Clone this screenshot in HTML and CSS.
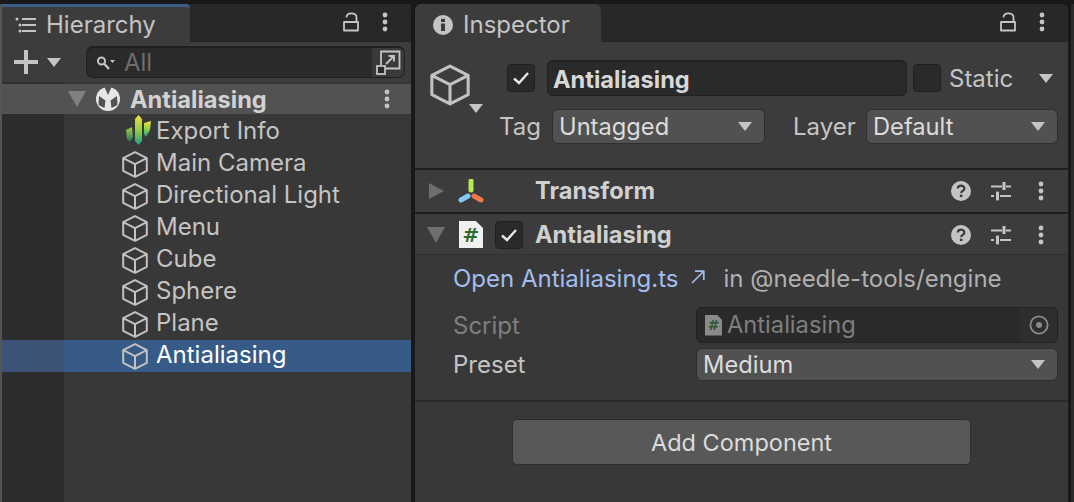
FILE: index.html
```html
<!DOCTYPE html>
<html lang="en">
<head>
  <meta charset="UTF-8" />
  <title>Inspector</title>
  <link rel="stylesheet" href="styles.css">
</head>
<body>
  <svg class="sprites" width="0" height="0">
    <defs>
      <symbol id="cube" viewBox="0 0 26 27">
        <path d="M13 1.2 L24.8 7.2 V19.8 L13 25.8 L1.2 19.8 V7.2 Z M1.2 7.2 L13 13.2 L24.8 7.2 M13 13.2 V25.8" fill="none" stroke="currentColor" stroke-width="2" stroke-linejoin="round" />
      </symbol>
      <symbol id="lock" viewBox="0 0 16 20">
        <path d="M1 10 H15 V18.5 H1 Z" fill="none" stroke="currentColor" stroke-width="1.8" stroke-linejoin="round" />
        <path d="M13.5 10 V5 C13.5 0 3.5 0 3.5 5.5" fill="none" stroke="currentColor" stroke-width="1.8" />
      </symbol>
      <symbol id="dots" viewBox="0 0 6 20">
        <circle cx="3" cy="3" r="2.4" fill="currentColor" />
        <circle cx="3" cy="10" r="2.4" fill="currentColor" />
        <circle cx="3" cy="17" r="2.4" fill="currentColor" />
      </symbol>
      <symbol id="help" viewBox="0 0 20 20">
        <circle cx="10" cy="10" r="10" fill="currentColor" />
        <path d="M6.8 7.6 C6.8 3.6 13.4 3.6 13.4 7.4 C13.4 9.8 10.1 9.8 10.1 12" fill="none" stroke="#3c3c3c" stroke-width="2.2" />
        <rect x="8.9" y="13.6" width="2.5" height="2.5" fill="#3c3c3c" />
      </symbol>
      <symbol id="sliders" viewBox="0 0 20 20">
        <path d="M0 5.5 H11 M15 5.5 H20 M0 15 H3 M9 15 H20" stroke="currentColor" stroke-width="2" />
        <rect x="11.5" y="1" width="3" height="8" fill="currentColor" />
        <rect x="5" y="10.5" width="3" height="9" rx="1" fill="currentColor" />
      </symbol>
    </defs>
  </svg>

  <div class="editor">
    <section class="panel hierarchy">
      <div class="tabbar">
        <div class="tab tab-active">
          <svg class="tab-icon" width="22" height="16" viewBox="0 0 22 16">
            <path d="M7 2 H21 M7 8 H21 M7 14 H21" stroke="#c4c4c4" stroke-width="2" />
            <circle cx="2" cy="2" r="1.5" fill="#c4c4c4" />
            <circle cx="5" cy="8" r="1.5" fill="#c4c4c4" />
            <circle cx="5" cy="14" r="1.5" fill="#c4c4c4" />
          </svg>
          <span>Hierarchy</span>
        </div>
        <div class="tab-tools">
          <svg class="ic-lock"><use href="#lock" /></svg>
          <svg class="ic-dots"><use href="#dots" /></svg>
        </div>
      </div>

      <div class="toolbar">
        <svg class="ic-plus" width="24" height="24" viewBox="0 0 24 24">
          <path d="M12 0 V24 M0 12 H24" stroke="#c4c4c4" stroke-width="4" />
        </svg>
        <span class="caret"></span>
        <div class="search">
          <svg class="ic-search" width="20" height="16" viewBox="0 0 20 16">
            <circle cx="5.5" cy="6" r="3.5" fill="none" stroke="#c4c4c4" stroke-width="2" />
            <path d="M8 8.5 L13 14" stroke="#c4c4c4" stroke-width="2.4" />
            <path d="M14 5 H19 L16.5 8 Z" fill="#c4c4c4" />
          </svg>
          <span class="search-text">All</span>
          <div class="search-btn">
            <svg width="25" height="25" viewBox="0 0 25 25">
              <path d="M5 15 V1.5 H23.5 V18.5 H10" fill="none" stroke="#c4c4c4" stroke-width="1.8" />
              <path d="M10 14 L18 6 M12.5 6 H18 V11.5" fill="none" stroke="#c4c4c4" stroke-width="1.8" />
              <rect x="1" y="16" width="8" height="8" fill="#2a2a2a" stroke="#c4c4c4" stroke-width="1.8" />
            </svg>
          </div>
        </div>
      </div>

      <div class="tree">
        <div class="scene-row">
          <span class="tree-arrow"></span>
          <svg class="ic-unity" width="24" height="26" viewBox="0 0 24 26">
            <circle cx="12" cy="13" r="12" fill="#e6e6e6" />
            <path d="M12 9 L8 0 H16 Z M9.5 14.5 L3 10 L2.5 19 L8.5 22 Z M14.5 14.5 L21 10 L21.5 19 L15.5 22 Z" fill="#525252" />
          </svg>
          <span class="scene-name">Antialiasing</span>
          <svg class="ic-dots"><use href="#dots" /></svg>
        </div>
        <div class="tree-row">
          <svg class="ic-export" width="26" height="30" viewBox="0 0 26 30">
            <defs>
              <linearGradient id="cactus" x1="0" y1="0" x2="0" y2="1">
                <stop offset="0" stop-color="#f4e13c" />
                <stop offset="0.5" stop-color="#8fce45" />
                <stop offset="1" stop-color="#1f9c8c" />
              </linearGradient>
              <linearGradient id="cactus-left" x1="0" y1="0" x2="0" y2="1">
                <stop offset="0" stop-color="#a5d040" />
                <stop offset="1" stop-color="#25705f" />
              </linearGradient>
            </defs>
            <path d="M9 4 L12.5 0 L16 4 V26 L12.5 30 L9 26 Z" fill="url(#cactus)" />
            <path d="M0 15 L6 12 L7 22 L4 27 L1 24 Z" fill="url(#cactus-left)" />
            <path d="M18 8 L25 6 L24 15 L20 22 L18 19 Z" fill="url(#cactus)" />
          </svg>
          <span>Export Info</span>
        </div>
        <div class="tree-row"><svg class="ic-cube"><use href="#cube" /></svg><span>Main Camera</span></div>
        <div class="tree-row"><svg class="ic-cube"><use href="#cube" /></svg><span>Directional Light</span></div>
        <div class="tree-row"><svg class="ic-cube"><use href="#cube" /></svg><span>Menu</span></div>
        <div class="tree-row"><svg class="ic-cube"><use href="#cube" /></svg><span>Cube</span></div>
        <div class="tree-row"><svg class="ic-cube"><use href="#cube" /></svg><span>Sphere</span></div>
        <div class="tree-row"><svg class="ic-cube"><use href="#cube" /></svg><span>Plane</span></div>
        <div class="tree-row tree-row-selected"><svg class="ic-cube"><use href="#cube" /></svg><span>Antialiasing</span></div>
      </div>
    </section>

    <section class="panel inspector">
      <div class="tabbar">
        <div class="tab tab-inspector">
          <svg class="tab-icon" width="20" height="20" viewBox="0 0 20 20">
            <circle cx="10" cy="10" r="10" fill="#c4c4c4" />
            <rect x="8" y="8.5" width="4" height="7.5" fill="#3c3c3c" />
            <rect x="8" y="3.8" width="4" height="3.2" fill="#3c3c3c" />
          </svg>
          <span>Inspector</span>
        </div>
        <div class="tab-tools">
          <svg class="ic-lock"><use href="#lock" /></svg>
          <svg class="ic-dots"><use href="#dots" /></svg>
        </div>
      </div>

      <div class="object-head">
        <div class="object-line">
          <div class="object-icon">
            <svg class="ic-cube-lg"><use href="#cube" /></svg>
            <span class="caret caret-object"></span>
          </div>
          <span class="check"><svg width="18" height="14" viewBox="0 0 18 14"><path d="M2 7.5 L7 12 L16 2" fill="none" stroke="#e6e6e6" stroke-width="2.4" /></svg></span>
          <div class="name-field">Antialiasing</div>
          <span class="check check-static"></span>
          <span class="static-label">Static</span>
          <span class="caret caret-static"></span>
        </div>
        <div class="tag-line">
          <span class="tag-label">Tag</span>
          <div class="popup popup-tag"><span>Untagged</span><span class="caret"></span></div>
          <span class="layer-label">Layer</span>
          <div class="popup popup-layer"><span>Default</span><span class="caret"></span></div>
        </div>
      </div>

      <div class="comp-head comp-transform">
        <span class="arrow-right"></span>
        <svg class="ic-transform" width="26" height="24" viewBox="0 0 26 24">
          <path d="M13 2 V11" stroke="#b5e853" stroke-width="5" stroke-linecap="round" />
          <path d="M3 21 L10 17" stroke="#84c9f5" stroke-width="5" stroke-linecap="round" />
          <path d="M16 17 L23 21" stroke="#ee7a4c" stroke-width="5" stroke-linecap="round" />
        </svg>
        <span class="comp-title">Transform</span>
        <svg class="ic-help"><use href="#help" /></svg>
        <svg class="ic-sliders"><use href="#sliders" /></svg>
        <svg class="ic-dots"><use href="#dots" /></svg>
      </div>

      <div class="comp-head comp-script">
        <span class="arrow-down"></span>
        <span class="doc">#</span>
        <span class="check"><svg width="18" height="14" viewBox="0 0 18 14"><path d="M2 7.5 L7 12 L16 2" fill="none" stroke="#e6e6e6" stroke-width="2.4" /></svg></span>
        <span class="comp-title">Antialiasing</span>
        <svg class="ic-help"><use href="#help" /></svg>
        <svg class="ic-sliders"><use href="#sliders" /></svg>
        <svg class="ic-dots"><use href="#dots" /></svg>
      </div>

      <div class="comp-body">
        <div class="open-line">
          <a class="open-link">Open Antialiasing.ts</a>
          <svg class="ic-external" width="14" height="14" viewBox="0 0 14 14">
            <path d="M1 13 L12.5 1.5 M4 1.2 H12.8 V10" fill="none" stroke="#a3bdf0" stroke-width="1.7" />
          </svg>
          <span class="open-where">in @needle-tools/engine</span>
        </div>
        <div class="prop-row prop-script">
          <span class="prop-label prop-label-off">Script</span>
          <div class="object-field">
            <span class="doc doc-small">#</span>
            <span class="object-text">Antialiasing</span>
            <div class="object-pick">
              <svg width="20" height="20" viewBox="0 0 20 20">
                <circle cx="10" cy="10" r="8.6" fill="none" stroke="#8a8a8a" stroke-width="1.8" />
                <circle cx="10" cy="10" r="3" fill="#8a8a8a" />
              </svg>
            </div>
          </div>
        </div>
        <div class="prop-row prop-preset">
          <span class="prop-label">Preset</span>
          <div class="popup popup-preset"><span>Medium</span><span class="caret"></span></div>
        </div>
      </div>

      <div class="add-wrap">
        <button class="add-btn">Add Component</button>
      </div>
    </section>

    <div class="side-strip"></div>
  </div>
</body>
</html>
```

FILE: styles.css
```css
:root {
  --bg-dark: #191919;
  --bg-tabbar: #282828;
  --bg-panel: #3c3c3c;
  --bg-body: #383838;
  --bg-field: #2a2a2a;
  --bg-popup: #515151;
  --text: #c4c4c4;
  --text-dim: #7f7f7f;
  --font: "Inter", "Liberation Sans", sans-serif;
}

* { box-sizing: border-box; margin: 0; padding: 0; }

html, body { height: 100%; }

body {
  background: var(--bg-dark);
  color: var(--text);
  font-family: var(--font);
  font-size: 24px;
  overflow: hidden;
}

.sprites { display: block; height: 0; }

svg { display: block; flex: none; }

.editor {
  display: flex;
  height: 502px;
  padding-top: 4px;
}

.panel {
  display: flex;
  flex-direction: column;
  background: var(--bg-body);
  height: 498px;
}

.hierarchy {
  width: 411px;
  margin-right: 4px;
  border-left: 2px solid #555;
  border-top-right-radius: 6px;
}

.inspector {
  width: 653px;
  border-top-left-radius: 6px;
  border-top-right-radius: 6px;
  overflow: hidden;
}

.side-strip {
  width: 3px;
  margin-left: 3px;
  background: #2c2c2c;
}

/* tabs */
.tabbar {
  display: flex;
  justify-content: space-between;
  height: 38px;
  background: var(--bg-tabbar);
  border-bottom: 1px solid #232323;
  flex: none;
}

.tab {
  display: flex;
  align-items: center;
  height: 38px;
  background: var(--bg-panel);
  color: var(--text);
  line-height: 1;
}

.tab-active {
  width: 188px;
  padding-left: 13px;
  border-top: 3px solid #3a5d8a;
  border-top-right-radius: 4px;
}

.tab-active .tab-icon { margin-right: 9px; }

.tab-inspector {
  width: 186px;
  padding-left: 18px;
  padding-top: 4px;
  border-top-left-radius: 6px;
  border-top-right-radius: 6px;
}

.tab-inspector .tab-icon { margin-right: 10px; }

.tab-tools {
  display: flex;
  align-items: center;
  padding-right: 23px;
  padding-bottom: 2px;
}

.ic-lock { width: 16px; height: 20px; color: var(--text); margin-right: 23px; }
.ic-dots { width: 6px; height: 20px; color: var(--text); }

/* hierarchy toolbar */
.toolbar {
  display: flex;
  align-items: center;
  height: 40px;
  background: var(--bg-panel);
  padding-left: 12px;
  flex: none;
}

.caret {
  display: block;
  flex: none;
  width: 0;
  height: 0;
  border-left: 7.5px solid transparent;
  border-right: 7.5px solid transparent;
  border-top: 9px solid var(--text);
}

.toolbar .caret { margin-left: 9px; }

.search {
  display: flex;
  align-items: center;
  width: 319px;
  height: 32px;
  margin-left: 25px;
  background: var(--bg-field);
  border: 1px solid #202020;
  border-top-width: 2px;
  border-radius: 7px;
  overflow: hidden;
}

.ic-search { margin-left: 9px; }

.search-text {
  flex: 1;
  margin-left: 8px;
  color: #6d6d6d;
  line-height: 1;
}

.search-btn {
  display: flex;
  align-items: center;
  justify-content: center;
  width: 32px;
  height: 100%;
  background: #3a3a3a;
}

/* tree */
.tree {
  flex: 1;
  background: linear-gradient(to right, #2d2d2d 62px, var(--bg-body) 62px);
}

.scene-row {
  display: flex;
  align-items: center;
  height: 30px;
  margin-top: 2px;
  margin-bottom: 2px;
  background: #525252;
  color: #d2d2d2;
  font-size: 23.6px;
  font-weight: 700;
  padding-left: 66px;
  padding-right: 21px;
}

.tree-arrow {
  flex: none;
  width: 0;
  height: 0;
  border-left: 9px solid transparent;
  border-right: 9px solid transparent;
  border-top: 16px solid #808080;
}

.ic-unity { margin-left: 10px; }

.scene-name { flex: 1; margin-left: 10px; }

.tree-row {
  display: flex;
  align-items: center;
  height: 32px;
  padding-left: 120px;
  padding-bottom: 2px;
}

.tree-row span { margin-left: 8px; line-height: 1; }

.ic-cube { width: 26px; height: 27px; color: #c2c2c2; margin-bottom: -2px; }

.ic-export { margin: -3px -4px 0 4px; }

.tree-row-selected {
  background: linear-gradient(to right, #3d5378 62px, #375b87 62px);
  color: #fff;
}

/* inspector head */
.object-head {
  height: 128px;
  background: var(--bg-panel);
  border-bottom: 2px solid #1e1e1e;
  flex: none;
}

.object-line {
  display: flex;
  align-items: flex-start;
  height: 67px;
  padding-top: 18px;
  padding-left: 15px;
}

.object-icon {
  display: flex;
  align-items: flex-end;
  width: 77px;
  margin-top: 4px;
}

.ic-cube-lg { width: 40px; height: 42px; color: #c2c2c2; }

.caret-object { margin-bottom: -7px; margin-left: -1px; }

.check {
  display: flex;
  align-items: center;
  justify-content: center;
  flex: none;
  width: 28px;
  height: 28px;
  background: var(--bg-field);
  border: 1px solid #202020;
  border-radius: 4px;
  margin-top: 4px;
}

.name-field {
  width: 360px;
  height: 36px;
  margin-left: 12px;
  padding-left: 5px;
  background: var(--bg-field);
  border: 1px solid #202020;
  border-top-width: 2px;
  border-radius: 6px;
  color: #d8d8d8;
  font-size: 23.6px;
  font-weight: 700;
  line-height: 35px;
}

.check-static { margin-left: 6px; }

.static-label { margin-left: 8px; line-height: 38px; }

.caret-static { margin-left: 26px; margin-top: 14px; }

.tag-line {
  display: flex;
  align-items: center;
  padding-left: 85px;
}

.tag-label { width: 52px; margin-left: -1px; flex: none; }

.popup {
  display: flex;
  align-items: center;
  justify-content: space-between;
  height: 35px;
  padding: 0 12px 0 6px;
  background: var(--bg-popup);
  border: 1px solid #2e2e2e;
  border-radius: 6px;
  color: #dcdcdc;
  font-size: 23.7px;
  line-height: 1;
}

.popup-tag { width: 213px; margin-left: 1px; }
.layer-label { margin-left: 28px; width: 73px; flex: none; }
.popup-layer { width: 192px; }

/* components */
.comp-head {
  display: flex;
  align-items: center;
  background: var(--bg-panel);
  flex: none;
  padding-right: 24px;
}

.comp-transform { height: 44px; border-bottom: 2px solid #1e1e1e; padding-left: 14px; }
.comp-script { height: 41px; border-bottom: 1px solid #303030; padding-left: 12px; padding-top: 1px; }

.arrow-right {
  flex: none;
  width: 0;
  height: 0;
  border-top: 8px solid transparent;
  border-bottom: 8px solid transparent;
  border-left: 15px solid #6e6e6e;
}

.arrow-down {
  flex: none;
  width: 0;
  height: 0;
  border-left: 9px solid transparent;
  border-right: 9px solid transparent;
  border-top: 16px solid #6e6e6e;
}

.ic-transform { margin-left: 14px; }

.comp-title {
  flex: 1;
  font-size: 23.6px;
  font-weight: 700;
  color: #d0d0d0;
  line-height: 1;
}

.comp-transform .comp-title { margin-left: 51px; }
.comp-script .comp-title { margin-left: 12px; }

.doc {
  display: flex;
  align-items: center;
  justify-content: center;
  flex: none;
  width: 24px;
  height: 27px;
  margin-left: 14px;
  background: #f0f0f0;
  clip-path: polygon(0 0, 70% 0, 100% 26%, 100% 100%, 0 100%);
  color: #2f6a2f;
  font-family: "DejaVu Sans", sans-serif;
  font-size: 20px;
  font-weight: 700;
  line-height: 1;
}

.comp-script .check { margin: 0 0 0 12px; }

.ic-help { width: 20px; height: 20px; color: var(--text); }
.ic-sliders { width: 20px; height: 20px; color: var(--text); margin-left: 20px; }
.comp-head .ic-dots { margin-left: 27px; }

.comp-body {
  height: 147px;
  border-bottom: 2px solid #2a2a2a;
  padding-left: 38px;
  padding-right: 10px;
  flex: none;
}

.open-line {
  display: flex;
  align-items: center;
  height: 50px;
  padding-bottom: 3px;
}

.open-link { color: #a3bdf0; }
.ic-external { margin-left: 12px; margin-bottom: 4px; }
.open-where { margin-left: 19px; color: #b0b0b0; }

.prop-row {
  display: flex;
  align-items: center;
  justify-content: space-between;
}

.prop-script { height: 36px; margin-top: 2px; }
.prop-preset { height: 33px; margin-top: 5px; }

.prop-label-off { color: var(--text-dim); }

.object-field {
  display: flex;
  align-items: center;
  width: 362px;
  height: 36px;
  background: var(--bg-field);
  border: 1px solid #222;
  border-radius: 6px;
  overflow: hidden;
  color: var(--text-dim);
}

.doc-small {
  width: 17px;
  height: 21px;
  margin-left: 8px;
  background: #8a8a8a;
  color: #2f5a2f;
  font-size: 14px;
}

.object-text { flex: 1; margin-left: 5px; font-size: 23.7px; line-height: 1; }

.object-pick {
  display: flex;
  align-items: center;
  justify-content: center;
  width: 37px;
  height: 100%;
  background: #2e2e2e;
}

.popup-preset { width: 362px; height: 33px; }

.add-wrap { padding: 17px 0 0 97px; }

.add-btn {
  display: block;
  width: 459px;
  height: 46px;
  padding-top: 2px;
  background: #585858;
  border: 1px solid #2e2e2e;
  border-radius: 5px;
  color: #dcdcdc;
  font-family: var(--font);
  font-size: 23.5px;
  line-height: 1;
}
```
